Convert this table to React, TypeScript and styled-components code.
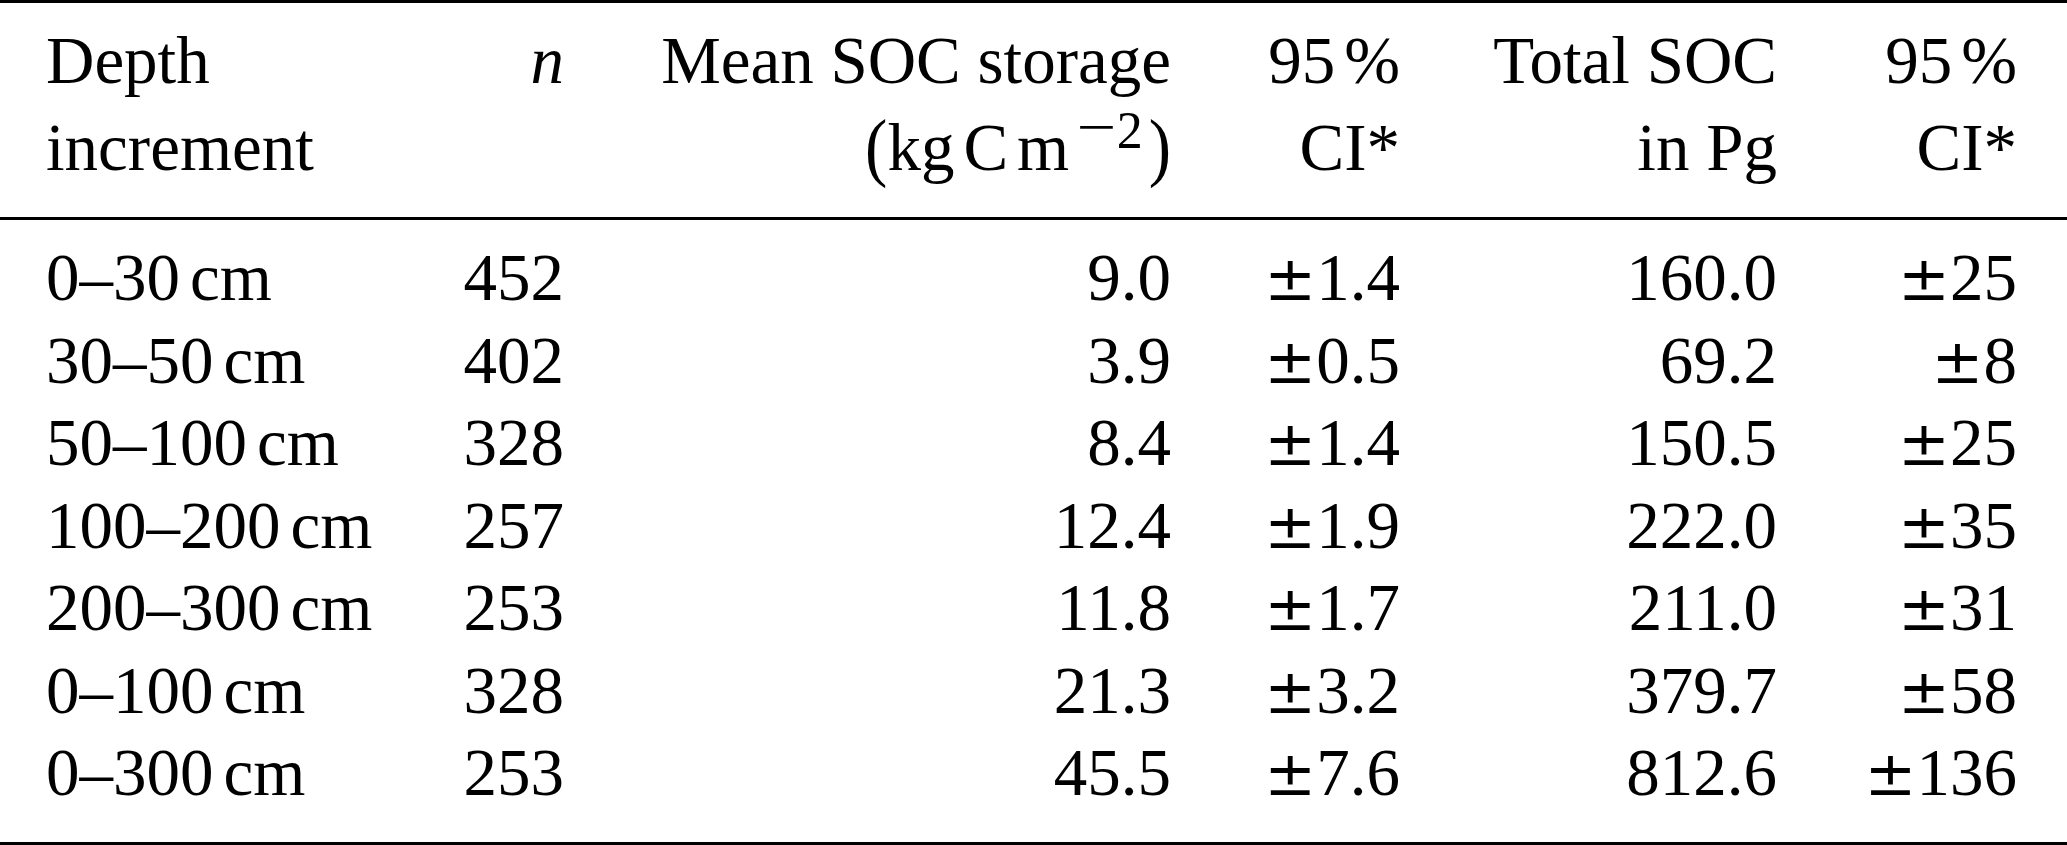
import styled, { createGlobalStyle } from "styled-components";

const GlobalStyle = createGlobalStyle`
    html, body {
        margin: 0;
        padding: 0;
        background: #ffffff;
    }
`

const columns = "354px 164px 607px 229px 377px 240px";

const Table = styled.div`
    width: 2067px;
    font-family: "Liberation Serif", "Times New Roman", serif;
    font-size: 67px;
    color: #000;
    border-top: 3px solid #000;
    border-bottom: 3px solid #000;
`

const Head = styled.div`
    display: grid;
    grid-template-columns: ${columns};
    padding: 14px 50px 26px 46px;
    line-height: 87px;
    border-bottom: 3px solid #000;
`

const Body = styled.div`
    display: grid;
    grid-template-columns: ${columns};
    padding: 16px 50px 28.5px 46px;
    line-height: 82.5px;
`

const Cell = styled.div<{ $left?: boolean }>`
    text-align: ${p => (p.$left ? "left" : "right")};
    white-space: nowrap;
`

const Italic = styled.span`
    font-style: italic;
`

// small fixed gap, like TeX's \, between number and unit
const Thin = styled.span<{ $w: number }>`
    display: inline-block;
    width: ${p => p.$w}px;
`

const Sup = styled.span`
    display: inline-block;
    font-size: 52px;
    line-height: 52px;
    vertical-align: 22px;
    margin: 0 6px 0 8px;
`

const SupMinus = styled.span`
    display: inline-block;
    font-size: 54px;
    line-height: 40px;
    vertical-align: 3px;
    transform: scaleX(1.3);
    margin: 0 5px 0 4px;
`

const Paren = styled.span`
    display: inline-block;
    transform: scaleY(1.15);
    transform-origin: 50% 60%;
`

const PlusMinus = styled.span`
    font-family: "DejaVu Serif", serif;
    font-size: 62px;
    line-height: 0;
`

const rows = [
    ["0–30", "452", "9.0", "1.4", "160.0", "25"],
    ["30–50", "402", "3.9", "0.5", "69.2", "8"],
    ["50–100", "328", "8.4", "1.4", "150.5", "25"],
    ["100–200", "257", "12.4", "1.9", "222.0", "35"],
    ["200–300", "253", "11.8", "1.7", "211.0", "31"],
    ["0–100", "328", "21.3", "3.2", "379.7", "58"],
    ["0–300", "253", "45.5", "7.6", "812.6", "136"],
];

const App = () => {
    return <>
        <GlobalStyle />
        <Table>
            <Head>
                <Cell $left>Depth<br />increment</Cell>
                <Cell><Italic>n</Italic></Cell>
                <Cell>
                    Mean SOC storage<br />
                    <Paren>(</Paren>kg<Thin $w={9} />C<Thin $w={9} />m<Sup><SupMinus>−</SupMinus>2</Sup><Paren>)</Paren>
                </Cell>
                <Cell>95<Thin $w={9} />%<br />CI*</Cell>
                <Cell>Total SOC<br />in Pg</Cell>
                <Cell>95<Thin $w={9} />%<br />CI*</Cell>
            </Head>
            <Body>
                {rows.map(r => <>
                    <Cell $left key={r[0] + "d"}>{r[0]}<Thin $w={10} />cm</Cell>
                    <Cell>{r[1]}</Cell>
                    <Cell>{r[2]}</Cell>
                    <Cell><PlusMinus>±</PlusMinus>{r[3]}</Cell>
                    <Cell>{r[4]}</Cell>
                    <Cell><PlusMinus>±</PlusMinus>{r[5]}</Cell>
                </>)}
            </Body>
        </Table>
    </>
}

export default App;
